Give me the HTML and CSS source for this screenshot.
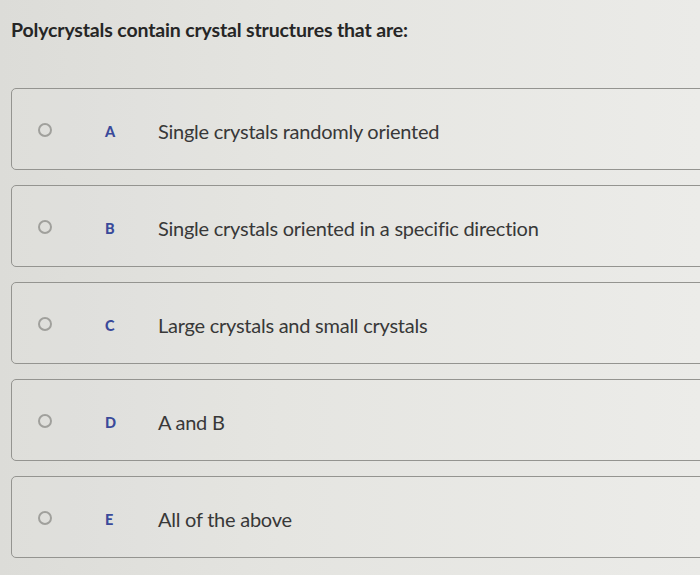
FILE: index.html
```html
<!DOCTYPE html>
<html>
<head>
<meta charset="utf-8">
<link rel="stylesheet" href="styles.css">
</head>
<body>
<div class="page">
  <h1 class="question">Polycrystals contain crystal structures that are:</h1>
  <div class="options">
    <div class="option"><span class="radio"></span><span class="letter">A</span><span class="text">Single crystals randomly oriented</span></div>
    <div class="option"><span class="radio"></span><span class="letter">B</span><span class="text">Single crystals oriented in a specific direction</span></div>
    <div class="option"><span class="radio"></span><span class="letter">C</span><span class="text">Large crystals and small crystals</span></div>
    <div class="option"><span class="radio"></span><span class="letter">D</span><span class="text">A and B</span></div>
    <div class="option"><span class="radio"></span><span class="letter">E</span><span class="text">All of the above</span></div>
  </div>
</div>
</body>
</html>
```
FILE: styles.css
```css
html, body {
  margin: 0;
  padding: 0;
  width: 700px;
  height: 575px;
  overflow: hidden;
}
body {
  background: linear-gradient(90deg, #dcdcd8 0%, #e4e4e0 40%, #ebebe8 100%);
  font-family: Lato, "Open Sans", sans-serif;
}
.page {
  padding: 16px 0 0 11px;
}
.question {
  margin: 0;
  font-size: 19.5px;
  font-weight: 700;
  color: #262626;
  letter-spacing: -0.15px;
  line-height: 28px;
}
.options {
  margin-top: 44px;
  display: flex;
  flex-direction: column;
  gap: 15px;
  width: 720px;
}
.option {
  height: 82px;
  box-sizing: border-box;
  border: 1.5px solid #949490;
  border-radius: 5px;
  display: flex;
  align-items: center;
  padding-left: 26px;
  padding-top: 4px;
  background: rgba(255,255,255,0.06);
}
.radio {
  width: 10px;
  height: 10px;
  border: 2px solid #a0a09c;
  border-radius: 50%;
  flex: none;
  margin-top: -3px;
}
.letter {
  width: 53px;
  margin-left: 53px;
  font-size: 14.5px;
  font-weight: 900;
  color: #3a4a9a;
  flex: none;
}
.text {
  font-size: 20px;
  color: #383838;
  letter-spacing: -0.25px;
}
```
